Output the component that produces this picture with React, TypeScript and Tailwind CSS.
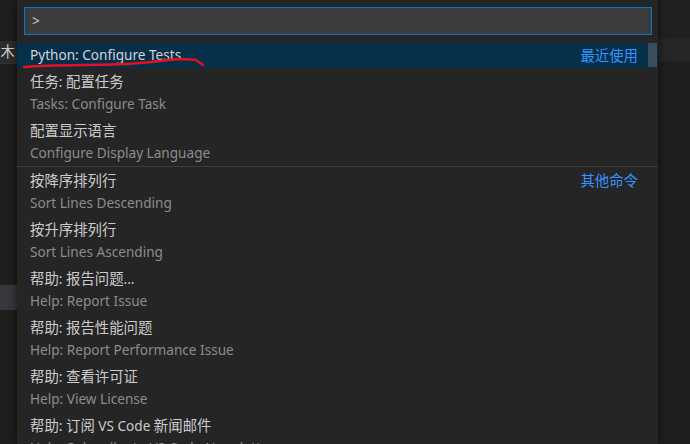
import React from "react";

type Item = { label: string; detail?: string; tag?: string; sep?: boolean };

const items: Item[] = [
  { label: "任务: 配置任务", detail: "Tasks: Configure Task" },
  { label: "配置显示语言", detail: "Configure Display Language" },
  { label: "按降序排列行", detail: "Sort Lines Descending", tag: "其他命令", sep: true },
  { label: "按升序排列行", detail: "Sort Lines Ascending" },
  { label: "帮助: 报告问题...", detail: "Help: Report Issue" },
  { label: "帮助: 报告性能问题", detail: "Help: Report Performance Issue" },
  { label: "帮助: 查看许可证", detail: "Help: View License" },
  { label: "帮助: 订阅 VS Code 新闻邮件", detail: "Help: Subscribe to VS Code Newsletter" },
];

const font = { fontFamily: '"Noto Sans", "Noto Sans CJK SC", sans-serif' };

// Chinese glyphs sit a bit larger than the latin ones in the screenshot
function Mixed({ text }: { text: string }) {
  const parts = text.split(/([\u3000-\u9fff\uff00-\uffef]+)/);
  return (
    <>
      {parts.map((p, i) =>
        /[\u3000-\u9fff]/.test(p) ? (
          <span key={i} className="text-[14.4px]">{p}</span>
        ) : (
          <span key={i}>{p}</span>
        )
      )}
    </>
  );
}

export default function App() {
  return (
    <div className="relative flex w-[690px] h-[444px] overflow-hidden bg-[#1e1e1e] text-[13.6px]" style={font}>
      {/* editor bits on the left */}
      <div className="flex w-[17px] shrink-0 flex-col">
        <div className="h-[41px] bg-[#1e1e1e]" />
        <div className="flex h-[22px] justify-end overflow-hidden whitespace-nowrap bg-[#2d2d2d] pr-[2px] text-[14.4px] leading-[22px] text-[#cccccc]">
          个木
        </div>
        <div className="h-[222px] border-t border-[#333]" />
        <div className="h-[25px] bg-[#37373d]" />
      </div>

      {/* quick open */}
      <div className="relative z-10 flex w-[641px] shrink-0 flex-col bg-[#252526] shadow-[0_0_8px_rgba(0,0,0,0.6)]">
        <div className="pt-[7px] pl-[7px] pr-[6px]">
          <div className="flex h-[28px] items-center border border-[#007acc] bg-[#3c3c3c] px-[7px] text-[#cccccc]">
            &gt;
          </div>
        </div>
        <div className="relative mt-[8px]">
          <div className="flex h-[25px] items-center justify-between bg-[#062f4a] pl-[13px] pr-[20px] text-[#d4d4d4]">
            <span className="whitespace-nowrap">Python: Configure Tests</span>
            <span className="text-[14.4px] text-[#3794ff]">最近使用</span>
          </div>
          <div className="absolute right-[1px] top-0 h-[24px] w-[9px] bg-[#3d4e5b]" />
          {items.map((it) => (
            <div
              key={it.label}
              className={`flex justify-between pl-[13px] pr-[20px] pt-[3px] ${it.sep ? "h-[50px] border-t border-[#3c3c3c]" : "h-[49px]"}`}
            >
              <div className="flex flex-col whitespace-nowrap leading-[22px]">
                <span className="text-[#cccccc]">
                  <Mixed text={it.label} />
                </span>
                <span className="text-[#8c8c8c]">{it.detail}</span>
              </div>
              {it.tag && <span className="text-[14.4px] leading-[22px] text-[#3794ff]">{it.tag}</span>}
            </div>
          ))}
        </div>
      </div>

      {/* editor bits on the right */}
      <div className="flex flex-1 flex-col">
        <div className="h-[38px] bg-[#202020]" />
        <div className="h-[25px] border-b border-[#191919] bg-[#262626]" />
        <div className="flex-1 bg-[#1e1e1e]" />
      </div>

      {/* red pen mark */}
      <svg className="absolute left-0 top-0 z-20" width="690" height="444" viewBox="0 0 690 444" fill="none">
        <path
          d="M24 67 C 60 64, 110 66, 140 63 S 183 58, 196 60 L 203 65"
          stroke="#e8101c"
          strokeWidth="2.5"
          strokeLinecap="round"
          strokeLinejoin="round"
        />
      </svg>
    </div>
  );
}
